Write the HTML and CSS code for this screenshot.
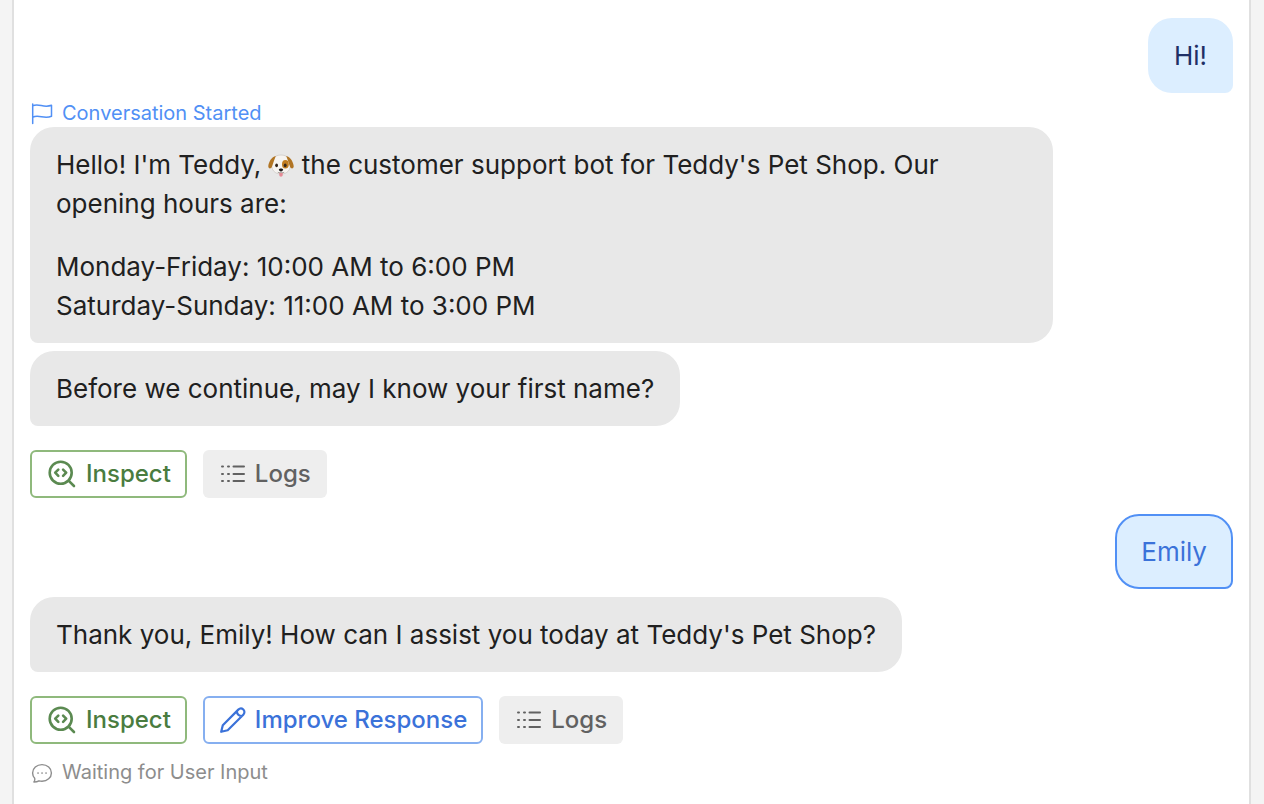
FILE: index.html
```html
<!DOCTYPE html>
<html lang="en">
<head>
<meta charset="utf-8">
<meta name="viewport" content="width=device-width, initial-scale=1">
<title>Teddy's Pet Shop</title>
<link rel="stylesheet" href="styles.css">
</head>
<body>
<svg class="sprite" aria-hidden="true">
  <symbol id="inspect" viewBox="0 0 32 32">
    <g fill="none" stroke="currentColor" stroke-width="2.6" stroke-linecap="round" stroke-linejoin="round">
      <circle cx="14.700" cy="14.700" r="11"/>
      <path d="M22.800 22.800 28 28M12.300 11.600 9.200 14.700l3.100 3.100M17.100 11.600l3.100 3.100-3.100 3.100"/>
    </g>
  </symbol>
  <symbol id="logs" viewBox="0 0 28 28">
    <path d="M3 6.500h1M9 6.500h1M14.500 6.500H25M3 14h1M9 14h1M14.500 14H25M3 21h1M9 21h1M14.500 21H25" fill="none" stroke="currentColor" stroke-width="2" stroke-linecap="round"/>
  </symbol>
  <symbol id="pencil" viewBox="0 0 28 28">
    <path d="M2.200 25.800 3.800 19.200 19.300 3.600c1.500-1.400 3.600-1.400 5-.1 1.500 1.400 1.500 3.700 0 5.200L8.700 24.200ZM17.800 5c.2 2.900 2.200 5 5.300 5" fill="none" stroke="currentColor" stroke-width="2.200" stroke-linejoin="round" stroke-linecap="round"/>
  </symbol>
</svg>
<main class="chat">
  <p class="bubble bubble-user">Hi!</p>

  <div class="status status-started">
    <svg class="status-icon" viewBox="0 0 24 24" aria-hidden="true"><path d="M2.700 3v19.500M2.700 4.800C9 1.900 13.500 7.400 21.500 4.300v11C14 18.500 9 13.200 2.700 16.200" fill="none" stroke="currentColor" stroke-width="1.500" stroke-linecap="round" stroke-linejoin="round"/></svg>
    <span>Conversation Started</span>
  </div>
  <div class="bubble bubble-bot">
    <p>Hello! I'm Teddy, <svg class="dog" viewBox="0 0 26 24" role="img" aria-label="dog face">
      <path d="M13 1c6 0 8.800 3.500 9.300 9 .4 6-3 10-9.300 10S3.300 16 3.700 10C4.200 4.500 7 1 13 1Z" fill="#f6f4f1" stroke="#c5c0bb" stroke-width=".6"/>
      <path d="M7.800 2C3.800 2.400.4 8.500.3 12.300c0 2.500 2.600 2.900 3.500.7C4.800 10.600 6 6.500 7.800 2ZM18.200 2c4 .4 7.400 6.500 7.500 10.300 0 2.500-2.600 2.900-3.500.7C21.200 10.600 20 6.500 18.200 2Z" fill="#b17524"/>
      <ellipse cx="17.400" cy="10.300" rx="3.400" ry="4.300" fill="#c17c20"/>
      <ellipse cx="8.600" cy="11.300" rx="1.400" ry="1.900" fill="#33261c"/>
      <ellipse cx="17.200" cy="11.300" rx="1.400" ry="1.900" fill="#33261c"/>
      <path d="M11.300 19h3.400v2c0 2.300-3.400 2.300-3.400 0Z" fill="#e58b96"/>
      <path d="M10.900 15.200c.6-.9 3.600-.9 4.200 0 .3 1.100-1.100 2.300-2.100 2.300s-2.400-1.200-2.100-2.300Z" fill="#1d1a1a"/>
      <path d="M9.800 18.300c1.400.7 2.500.4 3.200-.4.700.8 1.800 1.100 3.200.4" fill="none" stroke="#77706a" stroke-width=".7"/>
    </svg> the customer support bot for Teddy's Pet Shop. Our opening hours are:</p>
    <p>Monday-Friday: 10:00 AM to 6:00 PM<br>Saturday-Sunday: 11:00 AM to 3:00 PM</p>
  </div>
  <p class="bubble bubble-bot">Before we continue, may I know your first name?</p>
  <div class="actions">
    <button class="btn btn-inspect" type="button"><svg class="icon-inspect" aria-hidden="true"><use href="#inspect"/></svg>Inspect</button>
    <button class="btn btn-logs" type="button"><svg class="icon" aria-hidden="true"><use href="#logs"/></svg>Logs</button>
  </div>

  <p class="bubble bubble-user bubble-selected">Emily</p>
  <p class="bubble bubble-bot">Thank you, Emily! How can I assist you today at Teddy's Pet Shop?</p>
  <div class="actions">
    <button class="btn btn-inspect" type="button"><svg class="icon-inspect" aria-hidden="true"><use href="#inspect"/></svg>Inspect</button>
    <button class="btn btn-improve" type="button"><svg class="icon" aria-hidden="true"><use href="#pencil"/></svg>Improve Response</button>
    <button class="btn btn-logs" type="button"><svg class="icon" aria-hidden="true"><use href="#logs"/></svg>Logs</button>
  </div>
  <div class="status status-waiting">
    <svg class="status-icon" viewBox="0 0 24 24" aria-hidden="true"><path d="M4.700 18.200A8.600 8 0 0 1 2.600 12.900C2.600 8.200 6.700 4.600 12 4.600s9.400 3.600 9.400 8.300-4.100 8.300-9.400 8.300c-1 0-2-.1-3-.4-1.500.9-3.200 1.200-5.100 1.200.9-1.100 1.200-2.500.8-3.800Z" fill="none" stroke="currentColor" stroke-width="1.400" stroke-linejoin="round"/><path d="M8 13h.1M12 13h.1M16 13h.1" stroke="currentColor" stroke-width="1.700" stroke-linecap="round"/></svg>
    <span>Waiting for User Input</span>
  </div>
</main>
</body>
</html>
```

FILE: styles.css
```css
* { box-sizing: border-box; }

body {
  margin: 0;
  background: #f4f4f4;
  color: #202020;
  font-family: Inter, "Liberation Sans", sans-serif;
  font-size: 26px;
  line-height: 39px;
}

p { margin: 0; }

.sprite { position: absolute; width: 0; height: 0; }

.chat {
  display: flex;
  flex-direction: column;
  align-items: flex-start;
  gap: 8px;
  min-height: 100vh;
  margin: 0 13px 0 12px;
  padding: 18px 16px 16px;
  background: #fff;
  border: solid #e0e0e0;
  border-width: 0 2px;
}

.bubble {
  max-width: 85%;
  padding: 16px 24px;
  border: 2px solid transparent;
  border-radius: 24px;
}

.bubble p + p { margin-top: 24px; }

.bubble-bot {
  background: #e8e8e8;
  border-bottom-left-radius: 8px;
}

.bubble-user {
  align-self: flex-end;
  background: #dceeff;
  color: #1f2f66;
  border-bottom-right-radius: 8px;
}

.bubble-selected {
  border-color: #5190f5;
  color: #3b72d9;
}

.dog {
  width: 26px;
  height: 24px;
  vertical-align: -4px;
}

.status {
  display: flex;
  align-items: center;
  gap: 8px;
  color: #8d8d8d;
  font-size: 20px;
  line-height: 30px;
}

.status-started {
  margin: -3px 0 -9px;
  color: #5190f5;
}

.status-waiting { margin-top: -3px; }

.status-icon { width: 24px; height: 24px; }

.actions {
  display: flex;
  flex-wrap: wrap;
  gap: 16px;
  margin: 16px 0 8px;
}

.btn {
  display: flex;
  align-items: center;
  gap: 8px;
  height: 48px;
  padding: 0 14px;
  border: 2px solid transparent;
  border-radius: 6px;
  background: #fff;
  font: 500 24px/36px Inter, "Liberation Sans", sans-serif;
}

.btn-inspect {
  border-color: #8fb97c;
  color: #4a7c3f;
}

.btn-improve {
  border-color: #86aff0;
  color: #3b72d9;
}

.btn-logs {
  background: #eee;
  color: #616161;
}

.icon { width: 28px; height: 28px; }
.icon-inspect { width: 32px; height: 32px; color: #5b8a51; }
```
